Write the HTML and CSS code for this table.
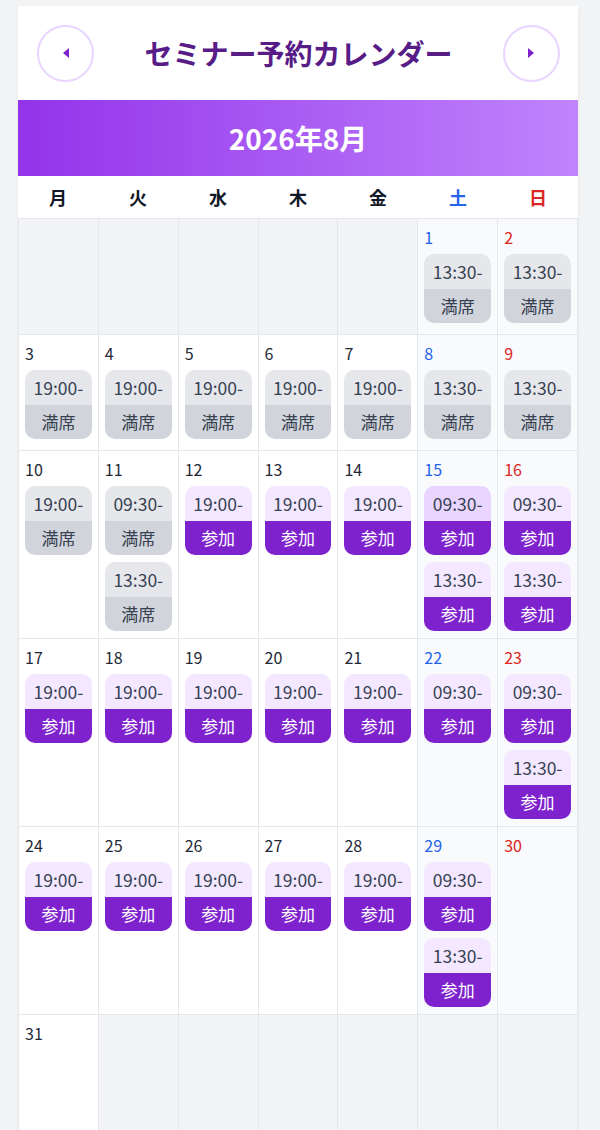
FILE: index.html
```html
<!DOCTYPE html>
<html lang="ja">
<head>
  <meta charset="UTF-8" />
  <title>セミナー予約カレンダー</title>
  <link rel="stylesheet" href="styles.css">
</head>
<body>

  <div class="calendar">
    <div class="cal-header">
      <button class="nav-btn" aria-label="前の月">
        <svg width="10" height="12" viewBox="0 0 10 12"><path d="M8 1 L2 6 L8 11 Z" fill="#7e22ce"/></svg>
      </button>
      <h1>セミナー予約カレンダー</h1>
      <button class="nav-btn" aria-label="次の月">
        <svg width="10" height="12" viewBox="0 0 10 12"><path d="M2 1 L8 6 L2 11 Z" fill="#7e22ce"/></svg>
      </button>
    </div>

    <div class="month-bar">2026年8月</div>

    <div class="weekdays">
      <div>月</div><div>火</div><div>水</div><div>木</div><div>金</div>
      <div class="sat">土</div><div class="sun">日</div>
    </div>

    <div class="grid">
      <!-- 1週目 -->
      <div class="cell empty"></div>
      <div class="cell empty"></div>
      <div class="cell empty"></div>
      <div class="cell empty"></div>
      <div class="cell empty"></div>
      <div class="cell weekend"><div class="day sat">1</div>
        <div class="slot full"><div class="time">13:30-</div><div class="status">満席</div></div>
      </div>
      <div class="cell weekend"><div class="day sun">2</div>
        <div class="slot full"><div class="time">13:30-</div><div class="status">満席</div></div>
      </div>

      <!-- 2週目 -->
      <div class="cell"><div class="day">3</div>
        <div class="slot full"><div class="time">19:00-</div><div class="status">満席</div></div>
      </div>
      <div class="cell"><div class="day">4</div>
        <div class="slot full"><div class="time">19:00-</div><div class="status">満席</div></div>
      </div>
      <div class="cell"><div class="day">5</div>
        <div class="slot full"><div class="time">19:00-</div><div class="status">満席</div></div>
      </div>
      <div class="cell"><div class="day">6</div>
        <div class="slot full"><div class="time">19:00-</div><div class="status">満席</div></div>
      </div>
      <div class="cell"><div class="day">7</div>
        <div class="slot full"><div class="time">19:00-</div><div class="status">満席</div></div>
      </div>
      <div class="cell weekend"><div class="day sat">8</div>
        <div class="slot full"><div class="time">13:30-</div><div class="status">満席</div></div>
      </div>
      <div class="cell weekend"><div class="day sun">9</div>
        <div class="slot full"><div class="time">13:30-</div><div class="status">満席</div></div>
      </div>

      <!-- 3週目 -->
      <div class="cell"><div class="day">10</div>
        <div class="slot full"><div class="time">19:00-</div><div class="status">満席</div></div>
      </div>
      <div class="cell"><div class="day">11</div>
        <div class="slot full"><div class="time">09:30-</div><div class="status">満席</div></div>
        <div class="slot full"><div class="time">13:30-</div><div class="status">満席</div></div>
      </div>
      <div class="cell"><div class="day">12</div>
        <div class="slot open"><div class="time">19:00-</div><div class="status">参加</div></div>
      </div>
      <div class="cell"><div class="day">13</div>
        <div class="slot open"><div class="time">19:00-</div><div class="status">参加</div></div>
      </div>
      <div class="cell"><div class="day">14</div>
        <div class="slot open"><div class="time">19:00-</div><div class="status">参加</div></div>
      </div>
      <div class="cell weekend"><div class="day sat">15</div>
        <div class="slot open hover"><div class="time">09:30-</div><div class="status">参加</div></div>
        <div class="slot open"><div class="time">13:30-</div><div class="status">参加</div></div>
      </div>
      <div class="cell weekend"><div class="day sun">16</div>
        <div class="slot open"><div class="time">09:30-</div><div class="status">参加</div></div>
        <div class="slot open"><div class="time">13:30-</div><div class="status">参加</div></div>
      </div>

      <!-- 4週目 -->
      <div class="cell"><div class="day">17</div>
        <div class="slot open"><div class="time">19:00-</div><div class="status">参加</div></div>
      </div>
      <div class="cell"><div class="day">18</div>
        <div class="slot open"><div class="time">19:00-</div><div class="status">参加</div></div>
      </div>
      <div class="cell"><div class="day">19</div>
        <div class="slot open"><div class="time">19:00-</div><div class="status">参加</div></div>
      </div>
      <div class="cell"><div class="day">20</div>
        <div class="slot open"><div class="time">19:00-</div><div class="status">参加</div></div>
      </div>
      <div class="cell"><div class="day">21</div>
        <div class="slot open"><div class="time">19:00-</div><div class="status">参加</div></div>
      </div>
      <div class="cell weekend"><div class="day sat">22</div>
        <div class="slot open"><div class="time">09:30-</div><div class="status">参加</div></div>
      </div>
      <div class="cell weekend"><div class="day sun">23</div>
        <div class="slot open"><div class="time">09:30-</div><div class="status">参加</div></div>
        <div class="slot open"><div class="time">13:30-</div><div class="status">参加</div></div>
      </div>

      <!-- 5週目 -->
      <div class="cell"><div class="day">24</div>
        <div class="slot open"><div class="time">19:00-</div><div class="status">参加</div></div>
      </div>
      <div class="cell"><div class="day">25</div>
        <div class="slot open"><div class="time">19:00-</div><div class="status">参加</div></div>
      </div>
      <div class="cell"><div class="day">26</div>
        <div class="slot open"><div class="time">19:00-</div><div class="status">参加</div></div>
      </div>
      <div class="cell"><div class="day">27</div>
        <div class="slot open"><div class="time">19:00-</div><div class="status">参加</div></div>
      </div>
      <div class="cell"><div class="day">28</div>
        <div class="slot open"><div class="time">19:00-</div><div class="status">参加</div></div>
      </div>
      <div class="cell weekend"><div class="day sat">29</div>
        <div class="slot open"><div class="time">09:30-</div><div class="status">参加</div></div>
        <div class="slot open"><div class="time">13:30-</div><div class="status">参加</div></div>
      </div>
      <div class="cell weekend"><div class="day sun">30</div></div>

      <!-- 6週目 -->
      <div class="cell"><div class="day">31</div></div>
      <div class="cell empty"></div>
      <div class="cell empty"></div>
      <div class="cell empty"></div>
      <div class="cell empty"></div>
      <div class="cell empty"></div>
      <div class="cell empty"></div>
    </div>
  </div>

</body>
</html>
```

FILE: styles.css
```css
body {
  margin: 0;
  padding: 6px 0 0 18px;
  background: #f3f4f6;
  font-family: "Noto Sans CJK JP", "Noto Sans", sans-serif;
  color: #1f2937;
}

.calendar {
  width: 560px;
  background: #fff;
  box-shadow: 0 1px 4px rgba(0, 0, 0, 0.06);
}

/* ヘッダー */
.cal-header {
  height: 94px;
  display: flex;
  align-items: center;
  justify-content: space-between;
  padding: 0 18px 0 19px;
  box-sizing: border-box;
}

.cal-header h1 {
  margin: 0;
  font-size: 28px;
  font-weight: 700;
  color: #581c87;
}

.nav-btn {
  width: 57px;
  height: 57px;
  border-radius: 50%;
  border: 2px solid #e9d5ff;
  background: #fff;
  display: flex;
  align-items: center;
  justify-content: center;
  padding: 0;
  cursor: pointer;
}

.month-bar {
  height: 76px;
  display: flex;
  align-items: center;
  justify-content: center;
  background: linear-gradient(to right, #9333ea, #c084fc);
  color: #fff;
  font-size: 28px;
  font-weight: 700;
}

/* 曜日 */
.weekdays {
  display: grid;
  grid-template-columns: repeat(7, 1fr);
  height: 43px;
  border-bottom: 1px solid #e5e7eb;
  box-sizing: border-box;
}

.weekdays div {
  display: flex;
  align-items: center;
  justify-content: center;
  font-size: 18px;
  font-weight: 700;
  color: #111827;
}

.sat { color: #2563eb !important; }
.sun { color: #dc2626 !important; }

/* 日付グリッド */
.grid {
  display: grid;
  grid-template-columns: repeat(7, 1fr);
  border-left: 1px solid #e5e7eb;
}

.cell {
  min-height: 116px;
  box-sizing: border-box;
  padding: 6px 6px 7px;
  border-right: 1px solid #e5e7eb;
  border-bottom: 1px solid #e5e7eb;
  background: #fff;
  display: flex;
  flex-direction: column;
  gap: 7px;
}

.cell.weekend { background: #f9fafb; }
.cell.empty { background: #f3f4f6; }

.day {
  font-size: 16px;
  line-height: 24px;
  height: 24px;
  margin-bottom: -2px;
  color: #1f2937;
}

/* 枠 */
.slot {
  border-radius: 10px;
  overflow: hidden;
  text-align: center;
}

.slot .time {
  height: 35px;
  line-height: 35px;
  font-size: 17.5px;
  color: #374151;
}

.slot .status {
  height: 34px;
  line-height: 34px;
  font-size: 17px;
}

.slot.full .time { background: #e5e7eb; }
.slot.full .status { background: #d1d5db; color: #374151; }

.slot.open .time { background: #f3e8ff; }
.slot.open .status { background: #7e22ce; color: #fff; }
.slot.open.hover .time { background: #e9d5ff; }
```
